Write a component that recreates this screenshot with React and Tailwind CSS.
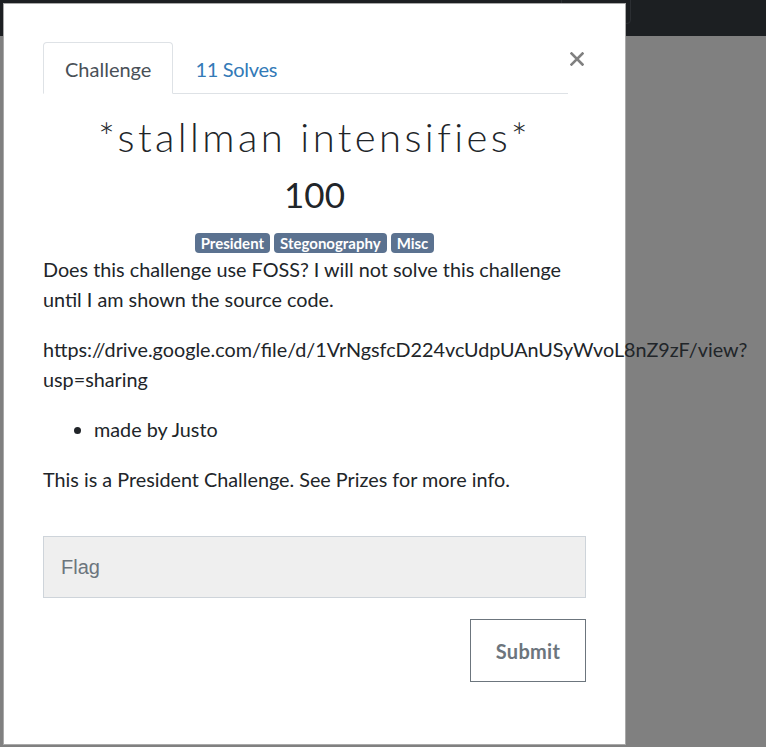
export default function App() {
  return (
    <div className="relative w-[766px] h-[747px] overflow-hidden bg-[#808080] font-['Lato',sans-serif]">
      {/* dimmed navbar behind the modal */}
      <div className="flex h-[36px] w-full bg-[#1c1f22]">
        <div className="ml-[561px] h-[25px] w-[70px] -mt-px rounded-b-[4px] border border-[#2b2e32]" />
      </div>

      {/* modal */}
      <div className="absolute left-[3px] top-[3px] w-[623px] h-[742px] bg-white border border-[#a9a9a9] px-[39px] pt-[38px] text-[#212529]">
        {/* header: tabs + close */}
        <div className="flex items-start">
          <ul className="flex flex-1 border-b border-[#dee2e6] h-[52px]">
            <li className="-mb-px h-[52px] rounded-t-[4px] border border-[#dee2e6] border-b-white bg-white px-[21px] pt-[11px] pb-[9px] text-[20px] leading-[30px] text-[#495057]">
              Challenge
            </li>
            <li className="-mb-px h-[52px] border border-transparent px-[21px] pt-[11px] pb-[9px] text-[20px] leading-[30px] tracking-[-0.3px] text-[#337ab7]">
              11 Solves
            </li>
          </ul>
          <div className="w-[18px] pt-[10px] pl-[2px]">
            <svg width="14" height="14" viewBox="0 0 14 14">
              <path d="M1.5 1.5 L12.5 12.5 M12.5 1.5 L1.5 12.5" stroke="#808080" strokeWidth="2.6" strokeLinecap="square" fill="none" />
            </svg>
          </div>
        </div>

        {/* title */}
        <h2 className="mt-[19px] text-center text-[40px] leading-[48px] font-light tracking-[3.4px] text-[#212529]">
          *stallman intensifies*
        </h2>
        <h3 className="mt-[12px] text-center text-[35px] leading-[43px] font-normal text-[#212529]">100</h3>

        {/* tags */}
        <div className="mt-[17px] flex justify-center gap-[4px]">
          <span className="h-[20px] rounded-[4px] bg-[#5b7290] px-[6px] text-[15px] leading-[20px] font-bold text-white">President</span>
          <span className="h-[20px] rounded-[4px] bg-[#5b7290] px-[6px] text-[15px] leading-[20px] font-bold text-white">Stegonography</span>
          <span className="h-[20px] rounded-[4px] bg-[#5b7290] px-[6px] text-[15px] leading-[20px] font-bold text-white">Misc</span>
        </div>

        {/* description */}
        <div className="mt-[1px] text-[19.8px] leading-[30px] text-[#212529]">
          <p>Does this challenge use FOSS? I will not solve this challenge until I am shown the source code.</p>
          <p className="mt-[20px]">
            <span className="whitespace-nowrap">https://drive.google.com/file/d/1VrNgsfcD224vcUdpUAnUSyWvoL8nZ9zF/view?</span>
            <br />
            usp=sharing
          </p>
          <ul className="mt-[20px] list-disc pl-[51px]">
            <li>made by Justo</li>
          </ul>
          <p className="mt-[20px]">This is a President Challenge. See Prizes for more info.</p>
        </div>

        {/* flag form */}
        <div className="mt-[42px] flex h-[62px] items-center border border-[#ced4da] bg-[#efefef] pl-[17px] font-['Liberation_Sans',Arial,sans-serif] text-[20px] text-[#6c757d]">
          Flag
        </div>
        <div className="mt-[21px] flex justify-end">
          <button className="h-[63px] w-[116px] border border-[#6c757d] bg-white text-[20px] font-bold tracking-[0.3px] text-[#6c757d]">
            Submit
          </button>
        </div>
      </div>
    </div>
  );
}
